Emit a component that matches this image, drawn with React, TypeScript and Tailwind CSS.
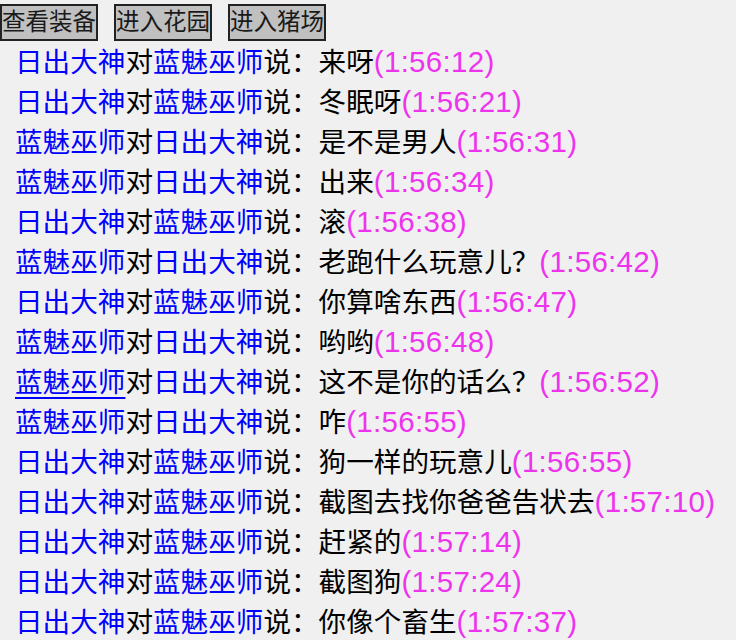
import React from "react";

const SUN = "日出大神";
const BLUE = "蓝魅巫师";

type Row = { from: string; to: string; msg: string; time: string; hover?: boolean };

const ROWS: Row[] = [
  { from: SUN, to: BLUE, msg: "来呀", time: "1:56:12" },
  { from: SUN, to: BLUE, msg: "冬眠呀", time: "1:56:21" },
  { from: BLUE, to: SUN, msg: "是不是男人", time: "1:56:31" },
  { from: BLUE, to: SUN, msg: "出来", time: "1:56:34" },
  { from: SUN, to: BLUE, msg: "滚", time: "1:56:38" },
  { from: BLUE, to: SUN, msg: "老跑什么玩意儿？", time: "1:56:42" },
  { from: SUN, to: BLUE, msg: "你算啥东西", time: "1:56:47" },
  { from: BLUE, to: SUN, msg: "哟哟", time: "1:56:48" },
  { from: BLUE, to: SUN, msg: "这不是你的话么？", time: "1:56:52", hover: true },
  { from: BLUE, to: SUN, msg: "咋", time: "1:56:55" },
  { from: SUN, to: BLUE, msg: "狗一样的玩意儿", time: "1:56:55" },
  { from: SUN, to: BLUE, msg: "截图去找你爸爸告状去", time: "1:57:10" },
  { from: SUN, to: BLUE, msg: "赶紧的", time: "1:57:14" },
  { from: SUN, to: BLUE, msg: "截图狗", time: "1:57:24" },
  { from: SUN, to: BLUE, msg: "你像个畜生", time: "1:57:37" },
];

const BUTTONS = ["查看装备", "进入花园", "进入猪场"];

export default function App() {
  return (
    <div className="min-h-[640px] w-[736px] bg-[#f0f0f0] text-black [font-family:'Liberation_Sans','Noto_Sans_CJK_SC',sans-serif]">
      <div className="flex h-[42px] items-start gap-[16px] pt-[4px]">
        {BUTTONS.map((b) => (
          <button
            key={b}
            className="h-[37px] border-2 border-[#222] bg-[#c0c0c0] px-0 text-[23.5px] leading-[33px] text-[#1a1a1a]"
          >
            {b}
          </button>
        ))}
      </div>
      <div className="pl-[15px]">
        {ROWS.map((r, i) => (
          <div key={i} className="h-[40px] whitespace-nowrap text-[27.6px] leading-[40px]">
            <a className={`text-[#0000ff] ${r.hover ? "underline underline-offset-[5px]" : ""}`}>{r.from}</a>
            <span>对</span>
            <a className="text-[#0000ff]">{r.to}</a>
            <span>说：</span>
            <span>{r.msg}</span>
            <span className="text-[29.5px] tracking-[0.3px] text-[#ee33ee]">({r.time})</span>
          </div>
        ))}
      </div>
    </div>
  );
}
